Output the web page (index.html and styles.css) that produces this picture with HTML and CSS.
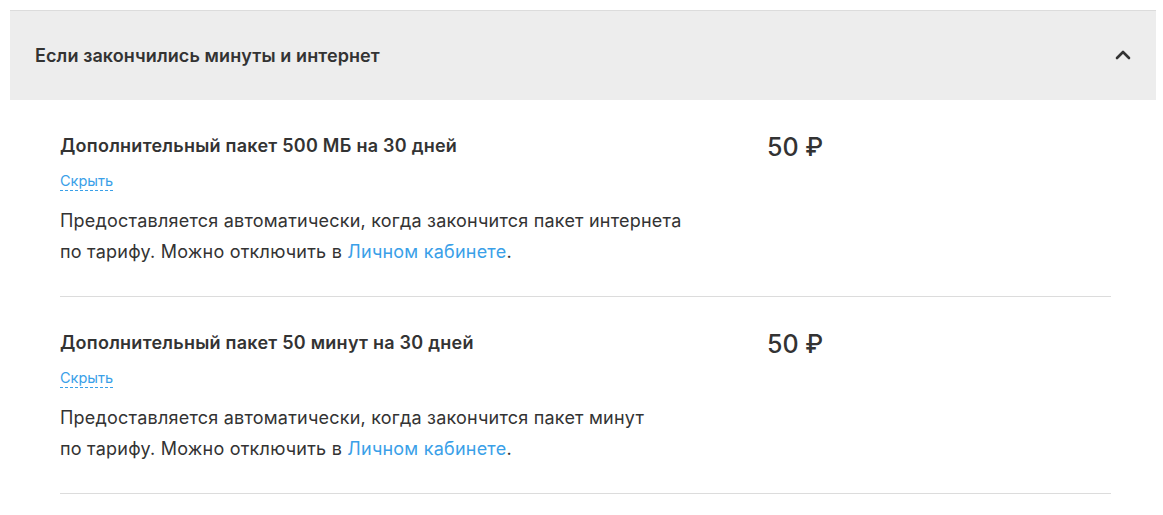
FILE: index.html
```html
<!DOCTYPE html>
<html lang="ru">
<head>
    <meta charset="UTF-8">
    <title>Если закончились минуты и интернет</title>
    <link rel="stylesheet" href="styles.css">
</head>
<body>
    <div class="akkordeon">
        <div class="akkordeon-zagolovok">
            <span>Если закончились минуты и интернет</span>
            <svg class="strelka" width="16" height="10" viewBox="0 0 16 10">
                <path d="M2 8 L8 2 L14 8" fill="none" stroke="#333" stroke-width="2.6" stroke-linecap="round" stroke-linejoin="round"/>
            </svg>
        </div>
        <div class="akkordeon-telo">
            <div class="usluga">
                <div class="usluga-info">
                    <div class="usluga-nazvanie">Дополнительный пакет 500 МБ на 30 дней</div>
                    <a class="skryt" href="#">Скрыть</a>
                    <p class="opisanie">Предоставляется автоматически, когда закончится пакет интернета по&nbsp;тарифу. Можно отключить в&nbsp;<a href="#">Личном кабинете</a>.</p>
                </div>
                <div class="cena">50 ₽</div>
            </div>
            <div class="usluga">
                <div class="usluga-info">
                    <div class="usluga-nazvanie">Дополнительный пакет 50 минут на 30 дней</div>
                    <a class="skryt" href="#">Скрыть</a>
                    <p class="opisanie">Предоставляется автоматически, когда закончится пакет минут по&nbsp;тарифу. Можно отключить в&nbsp;<a href="#">Личном кабинете</a>.</p>
                </div>
                <div class="cena">50 ₽</div>
            </div>
        </div>
    </div>
</body>
</html>
```

FILE: styles.css
```css
body {
    font-family: 'Inter', 'Noto Sans', sans-serif;
    margin: 10px 7px 0 10px;
    background-color: #fff;
    color: #333;
}

.akkordeon {
    border-top: 1px solid #dcdcdc;
}

.akkordeon-zagolovok {
    display: flex;
    justify-content: space-between;
    align-items: center;
    height: 89px;
    padding: 0 25px 0 25px;
    background-color: #ededed;
    font-size: 18px;
    font-weight: 600;
    letter-spacing: 0.1px;
}

.strelka {
    display: block;
    margin-top: -2px;
}

.akkordeon-telo {
    padding: 0 45px 0 50px;
}

.usluga {
    display: flex;
    padding: 34px 0 29px;
    border-bottom: 1px solid #dcdcdc;
}

.usluga-info {
    width: 640px;
}

.usluga-nazvanie {
    font-size: 18px;
    line-height: 24px;
    font-weight: 600;
    letter-spacing: 0.25px;
}

.skryt {
    display: inline-block;
    margin-top: 14px;
    font-size: 14.5px;
    line-height: 18px;
    color: #3aa0e8;
    text-decoration: none;
    border-bottom: 1px dashed #3aa0e8;
}

.opisanie {
    margin: 14px 0 0;
    font-size: 18px;
    line-height: 31px;
    letter-spacing: 0.22px;
}

.opisanie a {
    color: #3aa0e8;
    text-decoration: none;
}

.cena {
    margin-left: 67px;
    font-size: 25px;
    line-height: 26px;
    font-weight: 500;
}
```
